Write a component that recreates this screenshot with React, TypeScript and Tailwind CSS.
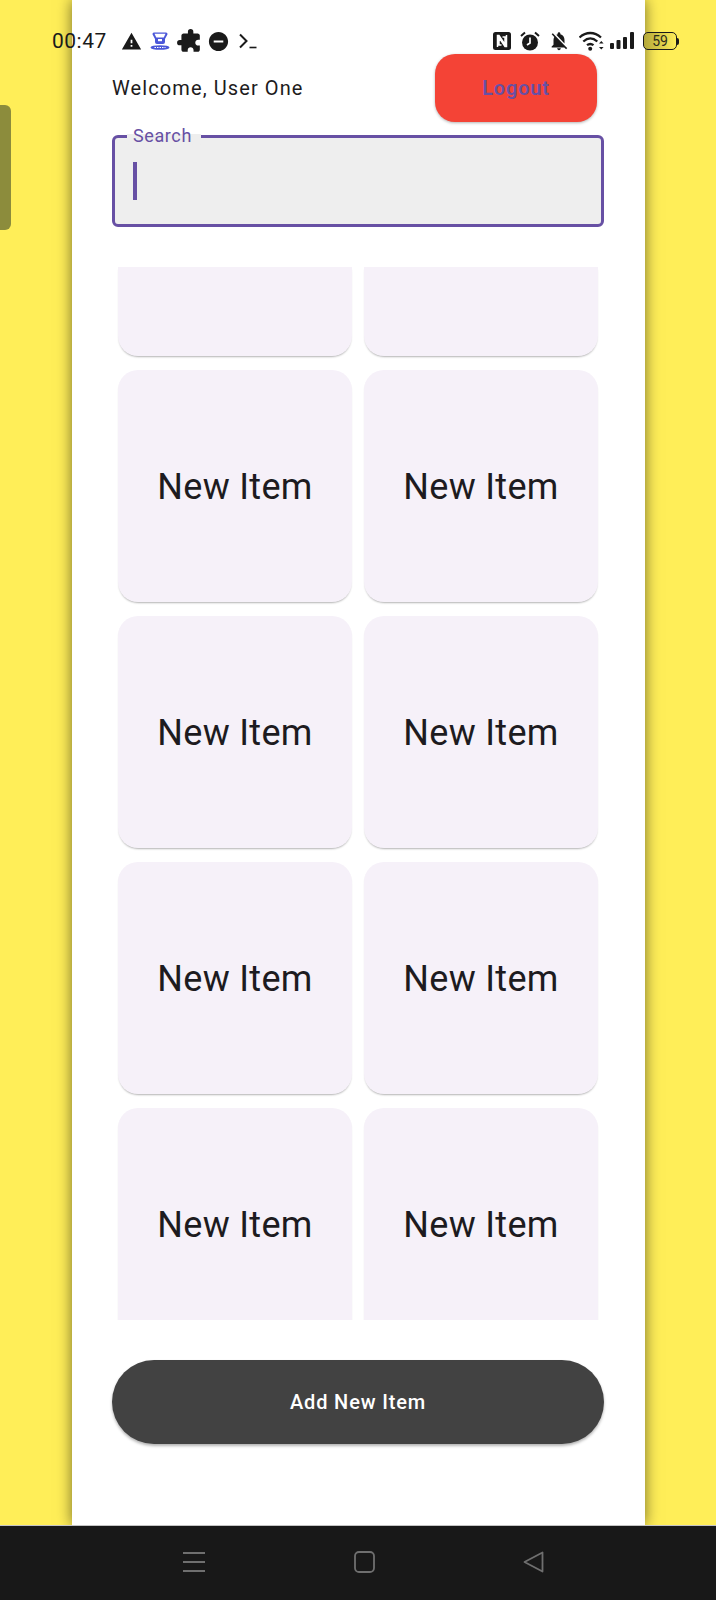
import React from 'react'
import { MdDoNotDisturbOn, MdExtension, MdNotificationsOff, MdWarning } from 'react-icons/md'

const ChefIcon = () => (
    <svg viewBox="0 0 20 18" className="w-[20px] h-[18px]">
        <path d="M4 .500h12a1.500 1.500 0 0 1 1.400 2.100L15 7v3a2 2 0 0 1-2 2H7a2 2 0 0 1-2-2V7L2.600 2.600A1.500 1.500 0 0 1 4 .500z" fill="#4a56d8" />
        <path d="M4.500 1.700h11L13.700 5.500H6.300z" fill="#ffffff" />
        <path d="M8 7h4v2.200H8z" fill="#ffffff" />
        <ellipse cx="10" cy="15.500" rx="9.500" ry="2.300" fill="#4a56d8" />
        <path d="M4.500 15.500h11" stroke="#ffffff" strokeWidth="1" strokeDasharray="1.500 1" />
    </svg>
)

const TerminalIcon = () => (
    <svg viewBox="0 0 18 18" className="w-[18px] h-[18px]" fill="none" stroke="#1a1a1a">
        <path d="M1 2.500 7.500 9 1 15.500" strokeWidth="2" />
        <path d="M10.500 15.500h7" strokeWidth="1.600" />
    </svg>
)

const NfcIcon = () => (
    <svg viewBox="0 0 18 18" className="w-[18px] h-[18px]">
        <rect x="0" y="0" width="18" height="18" rx="2.500" fill="#1a1a1a" />
        <path d="M4.500 15V3.500h1.500l6 9V5H9.500M13.500 3v11.500H12l-6-9V13h2.500" fill="none" stroke="#ffffff" strokeWidth="1.500" />
    </svg>
)

const AlarmIcon = () => (
    <svg viewBox="0 0 20 20" className="w-[20px] h-[20px]">
        <path d="M1 5 5 1.500M19 5l-4-3.500" stroke="#1a1a1a" strokeWidth="2" fill="none" />
        <circle cx="10" cy="11.500" r="8" fill="#1a1a1a" />
        <path d="M10 6.500v5.500l-3 2" stroke="#ffffff" strokeWidth="1.700" fill="none" />
    </svg>
)

const WifiIcon = () => (
    <svg viewBox="0 0 25 20" className="w-[25px] h-[20px]" fill="none" stroke="#1a1a1a" strokeWidth="2.300">
        <path d="M.500 6.500c6.500-6 15-6 21.500 0" />
        <path d="M4.300 10.500c4.500-4 9.500-4 14 0" />
        <path d="M8 14.200c2.200-1.700 4.300-1.700 6.500 0" />
        <circle cx="11.200" cy="17.800" r="2" fill="#1a1a1a" stroke="none" />
        <path d="m20 12.500 2.300-2.500 2.300 2.500h-4.600zM20 16l2.300 2.500 2.300-2.500h-4.600z" fill="#1a1a1a" stroke="none" />
    </svg>
)

const SignalIcon = () => (
    <svg viewBox="0 0 24 18" className="w-[24px] h-[18px]" fill="#1a1a1a">
        <rect x="0" y="11" width="4" height="6" rx="1" />
        <rect x="6.500" y="8" width="4" height="9" rx="1" />
        <rect x="13" y="5" width="4" height="12" rx="1" />
        <rect x="20" y="0" width="4" height="17" rx="1" />
    </svg>
)

const Battery = () => (
    <div className="flex items-center">
        <div className="w-[34px] h-[18px] rounded-[5px] border border-[#1a1a1a] bg-gradient-to-r from-[#b5a93a] to-[#ffee58] flex items-center justify-center text-[14px] leading-none text-[#2b2b1a]">
            59
        </div>
        <div className="w-[2px] h-[7px] bg-[#1a1a1a] rounded-r-sm" />
    </div>
)

const StatusBar = () => (
    <div className="absolute top-[30px] left-[52px] right-[37px] h-[22px] flex items-center justify-between text-[#1a1a1a]">
        <div className="flex items-center">
            <span className="text-[21px] leading-none tracking-[0.5px] w-[69px]">00:47</span>
            <MdWarning className="w-[21px] h-[21px]" />
            <div className="ml-[8px]"><ChefIcon /></div>
            <MdExtension className="w-[26px] h-[26px] ml-[6px] -scale-x-100" />
            <MdDoNotDisturbOn className="w-[23px] h-[23px] ml-[5px]" />
            <div className="ml-[9px]"><TerminalIcon /></div>
        </div>
        <div className="flex items-center">
            <NfcIcon />
            <div className="ml-[9px]"><AlarmIcon /></div>
            <MdNotificationsOff className="w-[22px] h-[22px] ml-[8px]" />
            <div className="ml-[9px]"><WifiIcon /></div>
            <div className="ml-[6px]"><SignalIcon /></div>
            <div className="ml-[9px]"><Battery /></div>
        </div>
    </div>
)

const ItemCard = () => (
    <div className="h-[232px] pt-[2px] rounded-[20px] bg-[#f6f1f9] shadow-[0_2px_2px_-1px_rgba(0,0,0,0.3)] flex items-center justify-center text-[36px] tracking-[0.3px] text-[#1d1b20]">
        New Item
    </div>
)

// top row is scrolled almost out of view, only the card's bottom shows
const ScrolledCard = () => <div className="h-[89px] rounded-b-[20px] bg-[#f6f1f9] shadow-[0_2px_2px_-1px_rgba(0,0,0,0.3)]" />

const App = () => {
    return (
        <div className="relative w-[716px] h-[1600px] flex flex-col bg-[#ffee58] overflow-hidden font-['Roboto',sans-serif]">
            <div className="flex-1 min-h-0 flex flex-col ml-[72px] w-[573px] pt-[54px] pl-[40px] pr-[41px] bg-white shadow-[0_0_14px_rgba(0,0,0,0.55)]">
                <div className="h-[68px] flex items-center justify-between shrink-0">
                    <p className="text-[20px] tracking-[1.1px] text-[#1d1b20]">Welcome, User One</p>
                    <button className="w-[162px] h-[68px] mr-[7px] rounded-[20px] bg-[#f44336] text-[#6750a4] text-[20px] tracking-[0.8px] font-semibold shadow-[0_1px_3px_rgba(0,0,0,0.3)]">
                        Logout
                    </button>
                </div>
                <div className="relative h-[92px] mt-[13px] shrink-0 rounded-[6px] border-[3px] border-[#6750a4] bg-[#eeeeee]">
                    <span className="absolute -top-[12px] left-[12px] pl-[6px] pr-[9px] h-[20px] leading-[20px] text-[18px] tracking-[0.6px] text-[#6750a4] bg-gradient-to-b from-white from-40% to-[#eeeeee] to-40%">
                        Search
                    </span>
                    <div className="absolute left-[18px] top-[24px] w-[4px] h-[38px] bg-[#6750a4]" />
                </div>
                <div className="mt-[40px] h-[1053px] shrink-0 overflow-hidden px-[6px]">
                    <div className="grid grid-cols-2 gap-x-[12px] gap-y-[14px]">
                        <ScrolledCard />
                        <ScrolledCard />
                        {Array.from({ length: 8 }, (_, i) => (
                            <ItemCard key={i} />
                        ))}
                    </div>
                </div>
                <button className="mt-[40px] h-[84px] shrink-0 rounded-full bg-[#424242] text-white text-[20px] tracking-[0.85px] font-medium shadow-[0_2px_3px_rgba(0,0,0,0.3)]">
                    Add New Item
                </button>
            </div>
            <div className="h-[75px] shrink-0 bg-[#181818] border-t border-[#c4c4c4] flex items-center relative z-10">
                <div className="flex items-center pl-[183px] pb-[2px]">
                    <svg viewBox="0 0 22 22" className="w-[22px] h-[22px]" fill="none" stroke="#6f6f6f" strokeWidth="2">
                        <path d="M0 2h22M0 11h22M0 20h22" />
                    </svg>
                    <svg viewBox="0 0 21 22" className="w-[21px] h-[22px] ml-[149px]" fill="none" stroke="#6f6f6f" strokeWidth="1.800">
                        <rect x="1" y="1" width="19" height="20" rx="4" />
                    </svg>
                    <svg viewBox="0 0 21 22" className="w-[21px] h-[22px] ml-[148px]" fill="none" stroke="#6f6f6f" strokeWidth="1.800" strokeLinejoin="round">
                        <path d="M19.500 1.500v19L1.500 11z" />
                    </svg>
                </div>
            </div>
            <div className="absolute left-0 top-[105px] w-[11px] h-[125px] rounded-r-[6px] bg-[#8c8c3c]" />
            <StatusBar />
        </div>
    )
}

export default App
